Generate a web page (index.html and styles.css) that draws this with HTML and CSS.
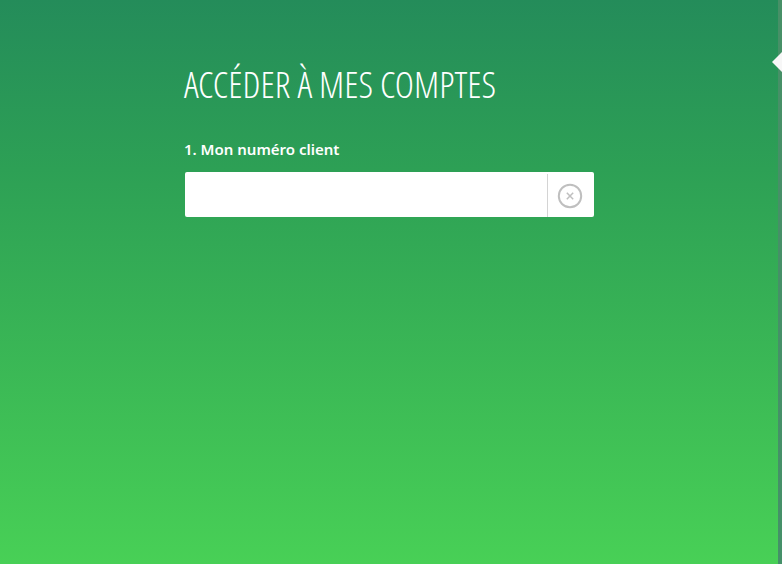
FILE: index.html
```html
<!DOCTYPE html>
<html lang="fr">
<head>
<meta charset="utf-8">
<meta name="viewport" content="width=device-width, initial-scale=1">
<title>Accéder à mes comptes</title>
<link rel="stylesheet" href="styles.css">
</head>
<body>
<main class="login">
  <form class="login-form">
    <h1 class="title">ACCÉDER À MES COMPTES</h1>
    <label class="label" for="client">1. Mon numéro client</label>
    <div class="field">
      <input class="input" id="client" type="text" autocomplete="off">
      <button class="clear" type="reset" aria-label="Effacer">
        <svg class="clear-icon" viewBox="0 0 26 26" aria-hidden="true">
          <circle cx="13" cy="13" r="11.2" fill="none" stroke="#bfbfbf" stroke-width="2"/>
          <path d="M9.8 9.8l6.4 6.4M16.2 9.8l-6.4 6.4" fill="none" stroke="#bfbfbf" stroke-width="1.5"/>
        </svg>
      </button>
    </div>
  </form>
</main>
<aside class="edge">
  <svg class="arrow" viewBox="0 0 10 20" aria-hidden="true"><path d="M10 0L0 10L10 20Z" fill="#f7f7f7"/></svg>
</aside>
</body>
</html>
```
FILE: styles.css
```css
* {
  box-sizing: border-box;
}

body {
  margin: 0;
  min-height: 100vh;
  display: flex;
  font-family: "Noto Sans", sans-serif;
  color: #fff;
  background: linear-gradient(#248c5a, #2da055 30%, #48d056);
}

.login {
  flex: 1;
  padding: 56px 24px 24px;
}

.login-form {
  max-width: 410px;
  margin: 0 auto;
}

.title {
  margin: 0;
  font-family: "Noto Sans ExtraCondensed Light", "Open Sans Condensed Light", "Open Sans Light Condensed", sans-serif;
  font-size: 37px;
  font-weight: 300;
  line-height: 56px;
  white-space: nowrap;
}

.label {
  display: block;
  margin: 27px 0 13px;
  font-size: 15px;
  font-weight: 600;
  line-height: 20px;
}

.field {
  display: flex;
  height: 45px;
  margin-left: 1px;
  overflow: hidden;
  border-radius: 2px;
  background: #fff;
}

.input {
  flex: 1;
  min-width: 0;
  padding: 0 12px;
  border: 0;
  outline: 0;
  background: transparent;
  font: inherit;
  color: #333;
}

.clear {
  width: 47px;
  margin-top: 2px;
  padding: 0 2px 0 0;
  display: grid;
  place-items: center;
  border: 0;
  border-left: 1px solid #d4d4d4;
  background: transparent;
  cursor: pointer;
}

.clear-icon {
  width: 26px;
  height: 26px;
}

.edge {
  position: relative;
  width: 5px;
  border-right: 1px solid #fff;
  background: linear-gradient(#479067, #459069);
}

.arrow {
  position: absolute;
  top: 52px;
  right: 0;
  width: 10px;
  height: 20px;
}
```
